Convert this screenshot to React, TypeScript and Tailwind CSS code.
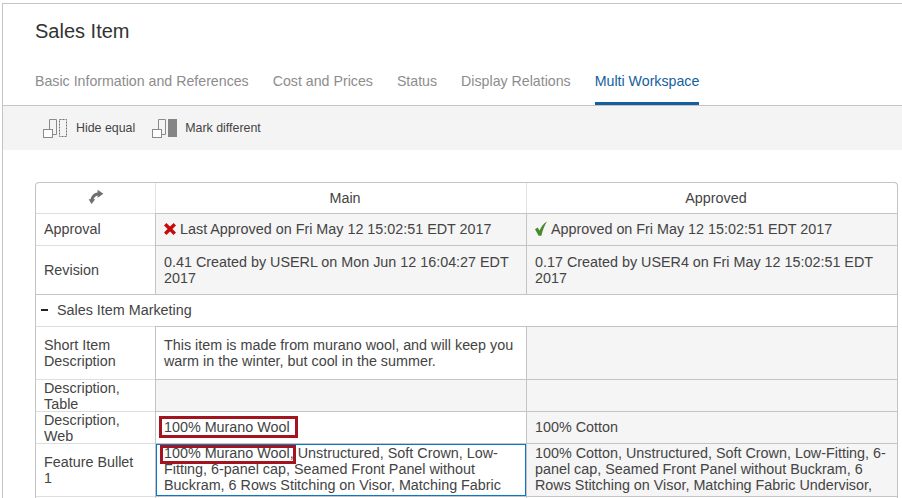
import type { ReactNode } from "react";

const TABS = ["Basic Information and References", "Cost and Prices", "Status", "Display Relations", "Multi Workspace"];

// ── Toolbar icons ─────────────────────────────────────────
const HideEqualIcon = () => (
  <svg width="26" height="20" viewBox="0 0 26 20" fill="none">
    <path d="M6.5 12V1.5H13.5V16.5H10" stroke="#8a8a8a" />
    <rect x="0.5" y="11.5" width="9" height="8" fill="#fff" stroke="#8a8a8a" />
    <rect x="16.5" y="1.5" width="7" height="17" stroke="#6f6f6f" strokeDasharray="2 1" />
  </svg>
);

const MarkDifferentIcon = () => (
  <svg width="26" height="20" viewBox="0 0 26 20" fill="none">
    <path d="M6.5 12V1.5H13.5V16.5H10" stroke="#8a8a8a" />
    <rect x="0.5" y="11.5" width="9" height="8" fill="#fff" stroke="#8a8a8a" />
    <rect x="16" y="1" width="9" height="18" fill="#858585" />
  </svg>
);

const SwapIcon = () => (
  <svg width="16" height="16" viewBox="0 0 16 16" fill="#707070">
    <path d="M2.4 11C3 7 5.6 4.2 9.6 3.6V0.8L15.4 4.8 9.6 8.8V6.6C7.4 7 6 8.6 5.4 11Z" />
    <path d="M0.6 10.2h6.6L3.6 15Z" />
  </svg>
);

const CrossIcon = () => (
  <svg width="12" height="12" viewBox="0 0 13 13" fill="#c90a0a" className="shrink-0">
    <path d="M0 2.6 2.6 0 6.5 3.9 10.4 0 13 2.6 9.1 6.5 13 10.4 10.4 13 6.5 9.1 2.6 13 0 10.4 3.9 6.5Z" />
  </svg>
);

const CheckIcon = () => (
  <svg width="12" height="15" viewBox="0 0 12 15" fill="#4a8a2a" className="shrink-0">
    <path d="M0 8.2 2.6 6.6 4.6 9.6C6 5.8 8.2 2.6 12 0.4 9.6 4.4 7.6 9 6.4 14.8H3.6Z" />
  </svg>
);

// ── Table cells ───────────────────────────────────────────
const Label = ({ children, className = "" }: { children: ReactNode; className?: string }) => (
  <td className={`border-t border-[#dedede] pl-2 pr-5 align-middle ${className}`}>{children}</td>
);

// two lines in a 32px row: the text runs a pixel past the row
const TightLabel = ({ children }: { children: ReactNode }) => (
  <td className="border-t border-[#dedede] pl-2 pr-5 align-top">
    <div className="h-[31px]">{children}</div>
  </td>
);

const Cell = ({ children, tone = "white", className = "px-2 align-middle" }: { children?: ReactNode; tone?: "white" | "gray"; className?: string }) => (
  <td className={`border-t border-l border-[#c4c4c4] ${tone === "gray" ? "bg-[#f5f5f5]" : "bg-white"} ${className}`}>
    {children}
  </td>
);

// red marker round a changed word
const Highlight = ({ children, box }: { children: ReactNode; box: string }) => (
  <span className="relative inline-block">
    {children}
    <span className={`absolute border-[3px] border-[#a3141f] ${box}`} />
  </span>
);

export default function App() {
  return (
    <div className="h-[498px] w-[902px] overflow-hidden bg-white font-['Liberation_Sans',Arial,sans-serif] text-[14.35px] leading-[16px] text-[#444]">
      <div className="ml-[2px] mt-[3px] h-[495px] border-l border-t border-[#c4c4c4]">
        <header className="pl-[32px]">
          <h1 className="pt-[16px] text-[20px] leading-[22px] text-[#333]">Sales Item</h1>
          <nav className="mt-[18px] flex gap-[24px] text-[14.2px]">
            {TABS.map((tab, i) => (
              <span
                key={tab}
                className={`h-[45px] pt-[13px] ${i === TABS.length - 1 ? "border-b-[3px] border-[#14609f] text-[#14609f]" : "text-[#8d8d8d]"}`}
              >
                {tab}
              </span>
            ))}
          </nav>
        </header>

        <div className="flex h-[45px] items-center border-t border-[#c4c4c4] bg-[#f4f4f4] pl-[40px] text-[12.4px] text-[#444]">
          <HideEqualIcon />
          <span className="ml-[7px]">Hide equal</span>
          <span className="ml-[17px]"><MarkDifferentIcon /></span>
          <span className="ml-[7px]">Mark different</span>
        </div>

        <div className="ml-[32px] mt-[32px] w-[863px] overflow-hidden rounded-t-[4px] border-x border-t border-[#c4c4c4]">
          <table className="w-full table-fixed border-separate border-spacing-0">
            <colgroup>
              <col className="w-[119px]" />
              <col className="w-[371px]" />
              <col />
            </colgroup>
            <tbody>
              <tr className="h-[30px]">
                <td className="text-center align-middle"><span className="inline-block pt-[1px]"><SwapIcon /></span></td>
                <td className="border-l border-[#e2e2e2] pl-2 text-center align-middle">Main</td>
                <td className="border-l border-[#e2e2e2] pl-2 text-center align-middle">Approved</td>
              </tr>
              <tr className="h-[32px]">
                <Label className="pb-[2px]">Approval</Label>
                <Cell tone="gray" className="px-2 pb-[2px] align-middle"><span className="flex items-center gap-[4px]"><CrossIcon />Last Approved on Fri May 12 15:02:51 EDT 2017</span></Cell>
                <Cell tone="gray" className="px-2 pb-[2px] align-middle"><span className="flex items-center gap-[4px]"><CheckIcon />Approved on Fri May 12 15:02:51 EDT 2017</span></Cell>
              </tr>
              <tr className="h-[49px]">
                <Label>Revision</Label>
                <Cell tone="gray">0.41 Created by USERL on Mon Jun 12 16:04:27 EDT 2017</Cell>
                <Cell tone="gray">0.17 Created by USER4 on Fri May 12 15:02:51 EDT 2017</Cell>
              </tr>
              <tr className="h-[32px]">
                <td colSpan={3} className="border-t border-[#c4c4c4] pb-[2px] pl-[5px] align-middle">
                  <span className="flex items-center">
                    <span className="h-[2px] w-[7px] bg-[#222]" />
                    <span className="ml-[9px]">Sales Item Marketing</span>
                  </span>
                </td>
              </tr>
              <tr className="h-[53px]">
                <Label>Short Item Description</Label>
                <Cell>This item is made from murano wool, and will keep you warm in the winter, but cool in the summer.</Cell>
                <Cell tone="gray" />
              </tr>
              <tr className="h-[32px]">
                <TightLabel>Description, Table</TightLabel>
                <Cell tone="gray" />
                <Cell tone="gray" />
              </tr>
              <tr className="h-[32px]">
                <TightLabel>Description, Web</TightLabel>
                <Cell className="px-2 pb-[2px] align-middle">
                  <Highlight box="-left-[5px] -right-[8px] -top-[3px] -bottom-[3px]">100% Murano Wool</Highlight>
                </Cell>
                <Cell tone="gray" className="px-2 pb-[2px] align-middle">100% Cotton</Cell>
              </tr>
              <tr className="h-[53px]">
                <Label>Feature Bullet 1</Label>
                <Cell className="align-top">
                  <div className="h-[52px] border border-[#0a78c8] px-[7px]">
                    <Highlight box="-left-[4px] -right-[2px] top-0 -bottom-[3px]">100% Murano Wool,</Highlight> Unstructured, Soft Crown, Low-Fitting, 6-panel cap, Seamed Front Panel without Buckram, 6 Rows Stitching on Visor, Matching Fabric
                  </div>
                </Cell>
                <Cell tone="gray" className="px-2 pt-[1px] align-top">100% Cotton, Unstructured, Soft Crown, Low-Fitting, 6-panel cap, Seamed Front Panel without Buckram, 6 Rows Stitching on Visor, Matching Fabric Undervisor,</Cell>
              </tr>
              <tr className="h-[20px]">
                <td className="border-t border-[#dedede]" />
                <td className="border-t border-l border-[#c4c4c4]" />
                <td className="border-t border-l border-[#c4c4c4]" />
              </tr>
            </tbody>
          </table>
        </div>
      </div>
    </div>
  );
}
